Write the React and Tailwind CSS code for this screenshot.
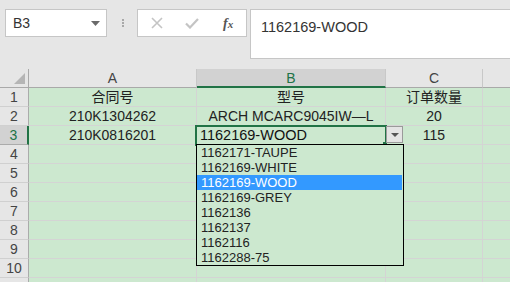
import React from 'react'

const font = { fontFamily: '"Liberation Sans", "Noto Sans CJK SC", sans-serif' }

const rows = [
  { n: 1, a: '合同号', b: '型号', c: '订单数量' },
  { n: 2, a: '210K1304262', b: 'ARCH MCARC9045IW—L', c: '20' },
  { n: 3, a: '210K0816201', b: '', c: '115' },
  { n: 4 }, { n: 5 }, { n: 6 }, { n: 7 }, { n: 8 }, { n: 9 }, { n: 10 }, { n: 11, hidden: true },
]

const options = [
  '1162171-TAUPE',
  '1162169-WHITE',
  '1162169-WOOD',
  '1162169-GREY',
  '1162136',
  '1162137',
  '1162116',
  '1162288-75',
]

function Toolbar() {
  return (
    <div className="flex items-start h-[69px] pt-[9px] bg-[#e6e6e6]">
      {/* name box */}
      <div className="ml-[5px] w-[102px] h-[28px] bg-white border border-[#c6c6c6] flex items-center pl-[7px] pr-[6px]">
        <span className="text-[14px] text-[#333] flex-1">B3</span>
        <svg width="9" height="5" viewBox="0 0 9 5"><path d="M0 0h9L4.5 5z" fill="#6a6a6a" /></svg>
      </div>
      <div className="ml-[15px] mt-[10px] flex flex-col gap-[1px]">
        <div className="w-[2px] h-[2px] bg-[#a8a8a8]" />
        <div className="w-[2px] h-[2px] bg-[#a8a8a8]" />
        <div className="w-[2px] h-[2px] bg-[#a8a8a8]" />
      </div>
      {/* cancel / enter / fx */}
      <div className="ml-[13px] w-[110px] h-[28px] bg-white border border-[#c6c6c6] flex items-center">
        <svg className="ml-[13px]" width="12" height="12" viewBox="0 0 12 12">
          <path d="M1 1l10 10M11 1L1 11" stroke="#c4c4c4" strokeWidth="1.6" />
        </svg>
        <svg className="ml-[22px]" width="14" height="11" viewBox="0 0 14 11">
          <path d="M1 5.5l4 4 8-8.5" stroke="#c4c4c4" strokeWidth="2.2" fill="none" />
        </svg>
        <span className="ml-[24px] text-[14px] italic font-bold text-[#555]" style={{ fontFamily: '"Liberation Serif", serif' }}>
          f<span className="text-[11px]">x</span>
        </span>
      </div>
      {/* formula input */}
      <div className="ml-[3px] flex-1 h-[50px] -mr-[2px] bg-white border border-[#c6c6c6] pl-[10px] pt-[5px]">
        <span className="text-[14.5px] text-[#333]">1162169-WOOD</span>
      </div>
    </div>
  )
}

function HeaderRow() {
  return (
    <div className="flex h-[19px] bg-[#e6e6e6] text-[14px] text-[#444] leading-[18px]">
      <div className="w-[29px] border-r border-[#a9a9a9] border-b border-b-[#a9a9a9] relative">
        <svg className="absolute right-[3px] bottom-[3px]" width="11" height="11" viewBox="0 0 11 11">
          <path d="M11 0v11H0z" fill="#b5b5b5" />
        </svg>
      </div>
      <div className="w-[168px] border-r border-[#c8c8c8] border-b border-b-[#a9a9a9] text-center">A</div>
      <div className="w-[189px] border-r border-[#c8c8c8] border-b-2 border-b-[#217346] bg-[#d2d2d2] text-center text-[#217346]">B</div>
      <div className="w-[97px] border-r border-[#c8c8c8] border-b border-b-[#a9a9a9] text-center">C</div>
      <div className="flex-1 border-b border-[#a9a9a9]" />
    </div>
  )
}

function Row({ r }) {
  const sel = r.n === 3
  return (
    <div className="flex h-[19px] text-[14px] leading-[18px]">
      <div
        className={
          sel
            ? 'w-[29px] border-r-2 border-r-[#217346] border-b border-b-[#ababab] bg-[#d2d2d2] text-center text-[#217346]'
            : 'w-[29px] border-r border-r-[#ababab] border-b border-b-[#d0d0d0] bg-[#e6e6e6] text-center text-[#444]'
        }
      >
        {r.hidden ? null : r.n}
      </div>
      <div className="w-[168px] border-r border-b border-[#d4d4d4] bg-[#cce8cf] text-center text-[#222]">{r.a}</div>
      <div className="w-[189px] border-r border-b border-[#d4d4d4] bg-[#cce8cf] text-center text-[#222]">{r.b}</div>
      <div className="w-[97px] border-r border-b border-[#d4d4d4] bg-[#cce8cf] text-center text-[#222]">{r.c}</div>
      <div className="flex-1 border-b border-[#d4d4d4] bg-[#cce8cf]" />
    </div>
  )
}

export default function App() {
  return (
    <div className="w-[510px] h-[282px] overflow-hidden bg-[#e6e6e6] select-none" style={font}>
      <Toolbar />
      <div className="relative">
        <HeaderRow />
        {rows.map((r) => (
          <Row key={r.n} r={r} />
        ))}

        {/* active cell B3 */}
        <div className="absolute left-[195px] top-[56px] w-[192px] h-[21px] border-2 border-[#217346] bg-[#cce8cf] pl-[3px] text-[14.5px] leading-[17px] text-[#111]">
          1162169-WOOD
        </div>
        <div className="absolute left-[383px] top-[73px] w-[4px] h-[4px] bg-[#217346]" />

        {/* dropdown arrow button */}
        <div className="absolute left-[386px] top-[57px] w-[17px] h-[17px] border border-[#9a9a9a] bg-[#e4e4e4] flex items-center justify-center">
          <svg width="8" height="4" viewBox="0 0 8 4"><path d="M0 0h8L4 4z" fill="#555" /></svg>
        </div>

        {/* validation list */}
        <div className="absolute left-[196px] top-[75px] w-[208px] h-[122px] border border-black bg-[#cce8cf] text-[13px] leading-[15px]">
          {options.map((o) => (
            <div
              key={o}
              className={
                o === '1162169-WOOD'
                  ? 'h-[15px] pl-[4px] mr-[1px] bg-[#3399ff] text-white'
                  : 'h-[15px] pl-[4px] text-[#222]'
              }
            >
              {o}
            </div>
          ))}
        </div>
      </div>
    </div>
  )
}
